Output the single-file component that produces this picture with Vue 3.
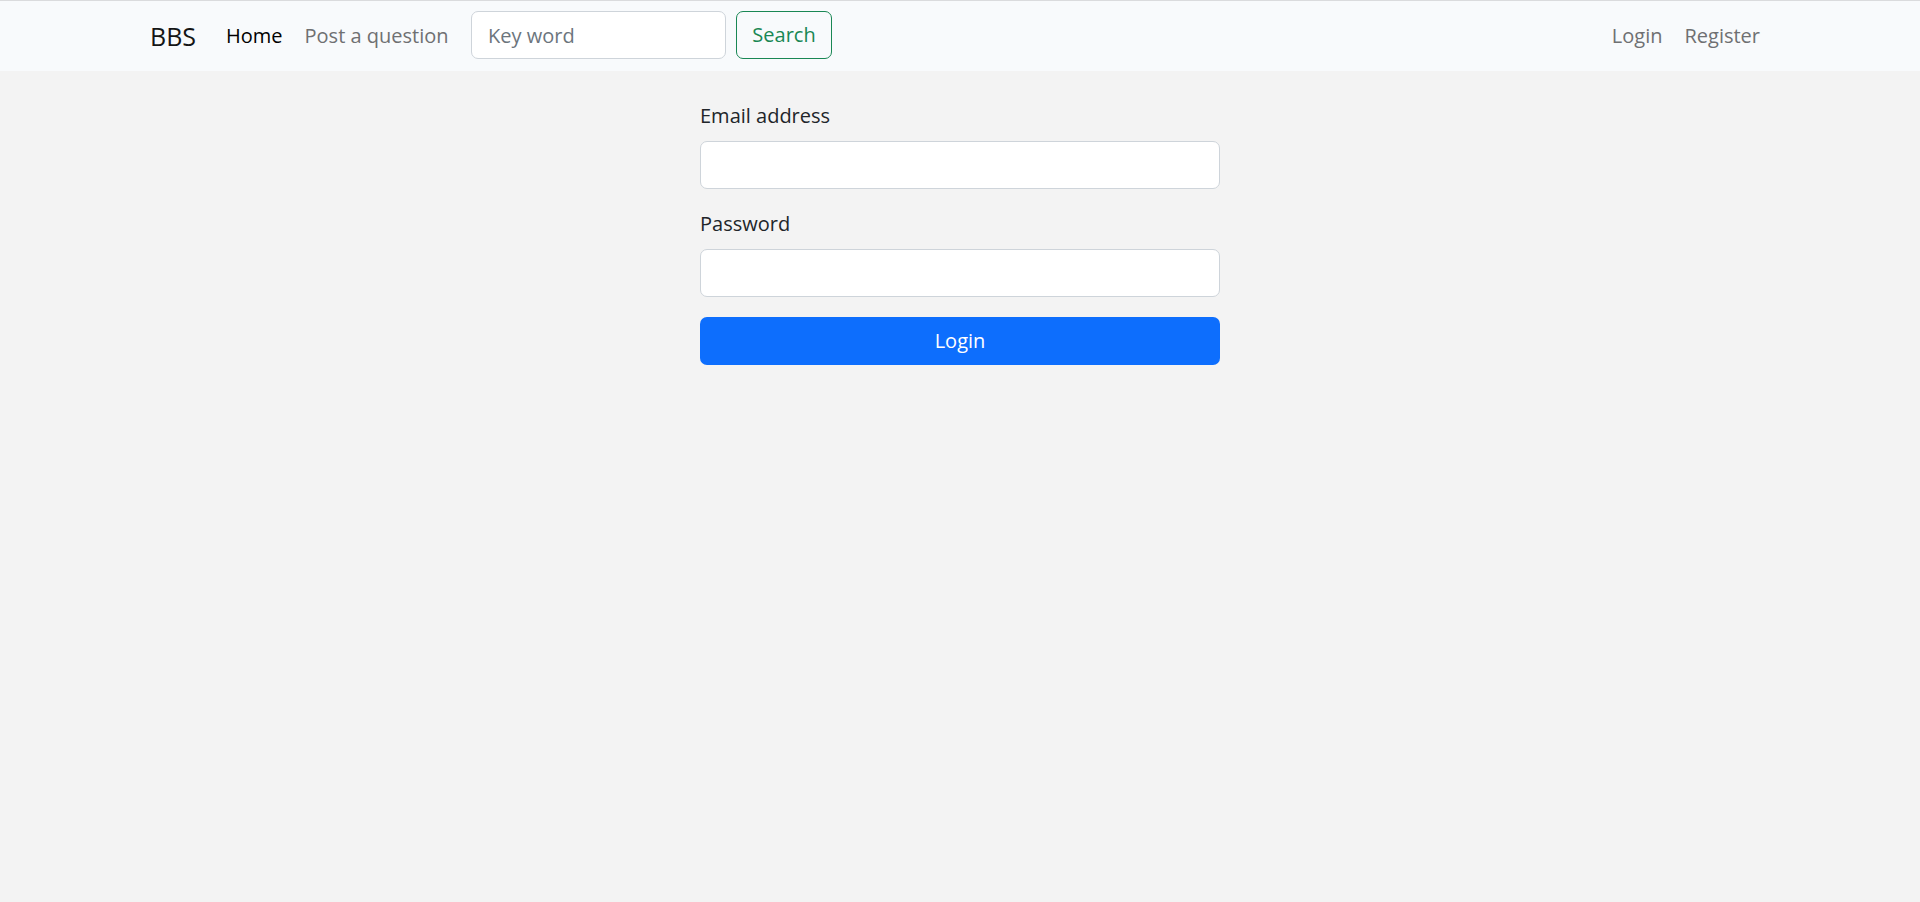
<script setup>
import { ref } from 'vue'

const keyword = ref('')
const email = ref('')
const password = ref('')
</script>

<template>
  <div class="page">
    <nav class="navbar">
      <div class="container bar">
        <a class="brand" href="#">BBS</a>
        <div class="links main-links">
          <a class="link active" href="#" aria-current="page">Home</a>
          <a class="link" href="#">Post a question</a>
        </div>
        <form class="search" role="search" @submit.prevent>
          <input v-model="keyword" class="control" type="search" placeholder="Key word" aria-label="Key word" />
          <button class="btn outline" type="submit">Search</button>
        </form>
        <div class="links account">
          <a class="link" href="#">Login</a>
          <a class="link" href="#">Register</a>
        </div>
      </div>
    </nav>
    <main class="container">
      <form class="login" @submit.prevent>
        <div class="field">
          <label for="email">Email address</label>
          <input id="email" v-model="email" class="control" type="email" />
        </div>
        <div class="field">
          <label for="password">Password</label>
          <input id="password" v-model="password" class="control" type="password" />
        </div>
        <button class="btn primary" type="submit">Login</button>
      </form>
    </main>
  </div>
</template>

<style>
body {
  background: #f3f3f3;
}
</style>

<style scoped>
.page,
.page * {
  box-sizing: border-box;
}

.page {
  font-family: "Segoe UI", "Open Sans", "Noto Sans", sans-serif;
  font-size: 20px;
  line-height: 30px;
  color: #212529;
}

.container {
  width: 100%;
  max-width: 1650px;
  margin: 0 auto;
  padding: 0 15px;
}

.navbar {
  padding: 10px 0;
  background: #f8fafc;
  border-top: 1px solid #dadbdd;
}

.bar {
  display: flex;
  align-items: flex-start;
}

.brand {
  margin-right: 20px;
  padding: 10px 0;
  font-size: 25px;
  color: #141515;
  text-decoration: none;
}

.links {
  display: flex;
  gap: 2px;
}

.main-links {
  min-width: 245px;
}

.link {
  padding: 10px;
  color: #6f7072;
  text-decoration: none;
  white-space: nowrap;
}

.link.active {
  color: #000;
}

.search {
  display: flex;
  gap: 10px;
  margin-left: 10px;
}

.search .control {
  width: 255px;
}

.account {
  margin-left: auto;
}

.control {
  width: 100%;
  height: 48px;
  padding: 8px 16px;
  font: inherit;
  color: inherit;
  background: #fff;
  border: 1px solid #ced4da;
  border-radius: 7px;
  appearance: none;
}

.control::placeholder {
  color: #6c757d;
  opacity: 1;
}

.control:focus {
  outline: none;
  border-color: #86b7fe;
}

.btn {
  height: 48px;
  padding: 8px 15px;
  font: inherit;
  border: 1px solid transparent;
  border-radius: 7px;
  cursor: pointer;
}

.outline {
  min-width: 96px;
  color: #198754;
  background: transparent;
  border-color: #198754;
}

.primary {
  width: 100%;
  color: #fff;
  background: #0d6efd;
}

.login {
  display: flex;
  flex-direction: column;
  gap: 20px;
  width: 100%;
  max-width: 520px;
  margin: 30px auto 0;
}

.field {
  display: flex;
  flex-direction: column;
  gap: 10px;
}
</style>
